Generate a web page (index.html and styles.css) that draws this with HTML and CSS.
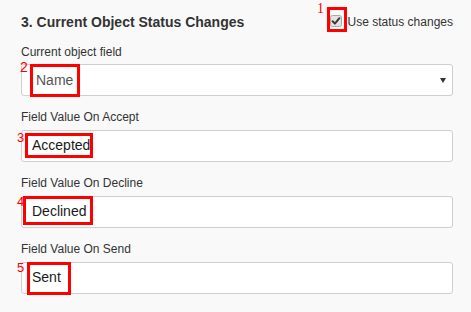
FILE: index.html
```html
<!DOCTYPE html>
<html lang="en">
<head>
<meta charset="utf-8">
<title>Current Object Status Changes</title>
<link rel="stylesheet" href="styles.css">
</head>
<body>
<div class="panel">
  <div class="header">
    <h3 class="title">3. Current Object Status Changes</h3>
    <label class="toggle">
      <span class="checkbox">
        <svg width="12" height="12" viewBox="0 0 12 12">
          <rect x="0.5" y="0.5" width="11" height="11" rx="2" ry="2" fill="#e3e3e3" stroke="#a8a8a8"/>
          <path d="M2.6 6.2 L4.9 8.6 L9.4 3.2" fill="none" stroke="#3a3a3a" stroke-width="2" stroke-linecap="round" stroke-linejoin="round"/>
        </svg>
      </span>
      <span class="toggle-text">Use status changes</span>
    </label>
  </div>

  <div class="field field-select">
    <div class="label">Current object field</div>
    <div class="control select">
      <span class="select-value">Name</span>
      <span class="caret"></span>
    </div>
  </div>

  <div class="field">
    <div class="label">Field Value On Accept</div>
    <div class="control input">Accepted</div>
  </div>

  <div class="field">
    <div class="label">Field Value On Decline</div>
    <div class="control input">Declined</div>
  </div>

  <div class="field">
    <div class="label">Field Value On Send</div>
    <div class="control input">Sent</div>
  </div>

  <span class="mark mark-1"></span>
  <span class="num num-1">1</span>
  <span class="mark mark-2"></span>
  <span class="num num-2">2</span>
  <span class="mark mark-3"></span>
  <span class="num num-3">3</span>
  <span class="mark mark-4"></span>
  <span class="num num-4">4</span>
  <span class="mark mark-5"></span>
  <span class="num num-5">5</span>
</div>
</body>
</html>
```

FILE: styles.css
```css
* {
  box-sizing: border-box;
}

html, body {
  margin: 0;
  padding: 0;
  background: #f9f9f9;
}

body {
  font-family: "Liberation Sans", Arial, sans-serif;
  color: #333;
}

.panel {
  position: relative;
  width: 471px;
  height: 312px;
  padding: 12px 18px 0 21px;
}

.header {
  display: flex;
  justify-content: space-between;
  align-items: center;
  height: 20px;
}

.title {
  margin: 0;
  font-size: 14px;
  line-height: 20px;
  font-weight: bold;
  color: #333;
}

.toggle {
  display: flex;
  align-items: center;
  gap: 6px;
  font-size: 12px;
  line-height: 16px;
  color: #333;
}

.checkbox {
  display: block;
  width: 12px;
  height: 12px;
  margin-bottom: 2px;
}

.checkbox svg {
  display: block;
}

.field {
  margin-top: 13px;
}

.field-select {
  margin-top: 12px;
}

.label {
  font-size: 12px;
  line-height: 16px;
  color: #333;
  margin-bottom: 5px;
}

.field-select .label {
  margin-bottom: 4px;
}

.control {
  height: 32px;
  background: #fff;
  border: 1px solid #cfcfcf;
  border-radius: 3px;
  display: flex;
  align-items: center;
  font-size: 14px;
}

.input {
  padding: 0 10px 3px 10px;
  color: #1a1a1a;
}

.select {
  justify-content: space-between;
  padding: 0 6px 0 14px;
  color: #555;
}

.caret {
  width: 0;
  height: 0;
  border-left: 3px solid transparent;
  border-right: 3px solid transparent;
  border-top: 5px solid #333;
  margin-top: 1px;
}

.mark {
  position: absolute;
  border: 3px solid #ff0000;
}

.mark-1 { left: 327px; top: 7px; width: 20px; height: 25px; }
.mark-2 { left: 30px; top: 64px; width: 50px; height: 33px; }
.mark-3 { left: 25px; top: 133px; width: 68px; height: 25px; }
.mark-4 { left: 23px; top: 196px; width: 70px; height: 29px; }
.mark-5 { left: 27px; top: 262px; width: 44px; height: 33px; }

.num {
  position: absolute;
  color: #ff0000;
  font-family: "Liberation Sans", Arial, sans-serif;
  font-size: 13px;
  line-height: 13px;
}

.num-1 {
  font-family: "Liberation Serif", "Times New Roman", serif;
  font-size: 14px;
  line-height: 14px;
  left: 317px;
  top: 2px;
}
.num-2 { left: 20px; top: 60px; font-size: 14px; line-height: 14px; }
.num-3 { left: 17px; top: 131px; }
.num-4 { left: 17px; top: 195px; }
.num-5 { left: 17px; top: 261px; }
```
